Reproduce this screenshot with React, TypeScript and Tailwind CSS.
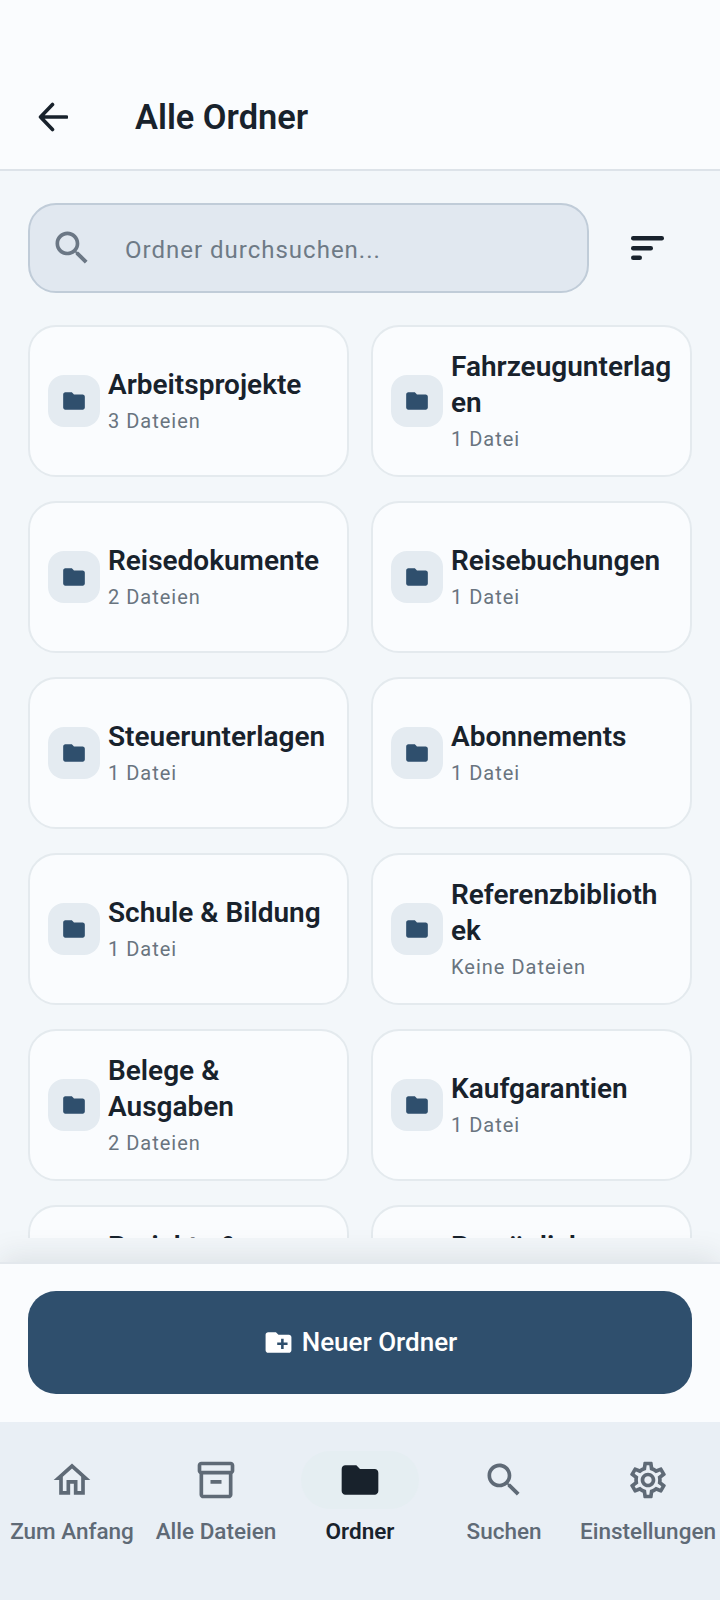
import React from "react";

const FONT = "font-['Roboto',sans-serif]";

const folderPath =
  "M10 4H4c-1.1 0-1.99.9-1.99 2L2 18c0 1.1.9 2 2 2h16c1.1 0 2-.9 2-2V8c0-1.1-.9-2-2-2h-8l-2-2z";
const searchPath =
  "M15.5 14h-.79l-.28-.27C15.41 12.59 16 11.11 16 9.5 16 5.91 13.09 3 9.5 3S3 5.91 3 9.5 5.91 16 9.5 16c1.61 0 3.09-.59 4.23-1.57l.27.28v.79l5 4.99L20.49 19l-4.99-5zm-6 0C7.01 14 5 11.99 5 9.5S7.01 5 9.5 5 14 7.01 14 9.5 11.99 14 9.5 14z";
const homePath =
  "M12 5.69l5 4.5V18h-2v-6H9v6H7v-7.81l5-4.5M12 3L2 12h3v8h6v-6h2v6h6v-8h3L12 3z";
const archivePath =
  "M20 2H4c-1 0-2 .9-2 2v3.01c0 .72.43 1.34 1 1.69V20c0 1.1 1.1 2 2 2h14c.9 0 2-.9 2-2V8.7c.57-.35 1-.97 1-1.69V4c0-1.1-1-2-2-2zm-1 18H5V9h14v11zm1-13H4V4h16v3zM9 12h6v2H9z";
const gearPath =
  "M19.43 12.98c.04-.32.07-.64.07-.98 0-.34-.03-.66-.07-.98l2.11-1.65c.19-.15.24-.42.12-.64l-2-3.46c-.09-.16-.26-.25-.44-.25-.06 0-.12.01-.17.03l-2.49 1c-.52-.4-1.08-.73-1.69-.98l-.38-2.65C14.46 2.18 14.25 2 14 2h-4c-.25 0-.46.18-.49.42l-.38 2.65c-.61.25-1.17.59-1.69.98l-2.49-1c-.06-.02-.12-.03-.18-.03-.17 0-.34.09-.43.25l-2 3.46c-.13.22-.07.49.12.64l2.11 1.65c-.04.32-.07.65-.07.98 0 .33.03.66.07.98l-2.11 1.65c-.19.15-.24.42-.12.64l2 3.46c.09.16.26.25.44.25.06 0 .12-.01.17-.03l2.49-1c.52.4 1.08.73 1.69.98l.38 2.65c.03.24.24.42.49.42h4c.25 0 .46-.18.49-.42l.38-2.65c.61-.25 1.17-.59 1.69-.98l2.49 1c.06.02.12.03.18.03.17 0 .34-.09.43-.25l2-3.46c.12-.22.07-.49-.12-.64l-2.11-1.65zm-1.98-1.71c.04.31.05.52.05.73 0 .21-.02.43-.05.73l-.14 1.13.89.7 1.08.84-.7 1.21-1.27-.51-1.04-.42-.9.68c-.43.32-.84.56-1.25.73l-1.06.43-.16 1.13-.2 1.35h-1.4l-.19-1.35-.16-1.13-1.06-.43c-.43-.18-.83-.41-1.23-.71l-.91-.7-1.06.43-1.27.51-.7-1.21 1.08-.84.89-.7-.14-1.13c-.03-.31-.05-.54-.05-.74s.02-.43.05-.73l.14-1.13-.89-.7-1.08-.84.7-1.21 1.27.51 1.04.42.9-.68c.43-.32.84-.56 1.25-.73l1.06-.43.16-1.13.2-1.35h1.39l.19 1.35.16 1.13 1.06.43c.43.18.83.41 1.23.71l.91.7 1.06-.43 1.27-.51.7 1.21-1.07.85-.89.7.14 1.13zM12 8c-2.21 0-4 1.79-4 4s1.79 4 4 4 4-1.79 4-4-1.79-4-4-4zm0 6c-1.1 0-2-.9-2-2s.9-2 2-2 2 .9 2 2-.9 2-2 2z";

function Icon({ d, className }: { d: string; className: string }) {
  return (
    <svg viewBox="0 0 24 24" fill="currentColor" className={className}>
      <path d={d} />
    </svg>
  );
}

const folders: { name: string; count: string }[] = [
  { name: "Arbeitsprojekte", count: "3 Dateien" },
  { name: "Fahrzeugunterlagen", count: "1 Datei" },
  { name: "Reisedokumente", count: "2 Dateien" },
  { name: "Reisebuchungen", count: "1 Datei" },
  { name: "Steuerunterlagen", count: "1 Datei" },
  { name: "Abonnements", count: "1 Datei" },
  { name: "Schule & Bildung", count: "1 Datei" },
  { name: "Referenzbibliothek", count: "Keine Dateien" },
  { name: "Belege & Ausgaben", count: "2 Dateien" },
  { name: "Kaufgarantien", count: "1 Datei" },
  { name: "Projekte & Planung", count: "1 Datei" },
  { name: "Persönliche Dokumente", count: "1 Datei" },
];

const navItems = [
  { label: "Zum Anfang", d: homePath },
  { label: "Alle Dateien", d: archivePath },
  { label: "Ordner", d: folderPath, active: true },
  { label: "Suchen", d: searchPath },
  { label: "Einstellungen", d: gearPath },
];

function FolderCard({ name, count }: { name: string; count: string }) {
  return (
    <div className="flex h-[152px] items-center gap-[8px] rounded-[28px] border-2 border-[#e4eaee] bg-[#fafcfe] pl-[18px] pr-[18px]">
      <div className="flex h-[52px] w-[52px] shrink-0 items-center justify-center rounded-[16px] bg-[#e4ebf1]">
        <Icon d={folderPath} className="h-[26px] w-[26px] text-[#2f4f6d]" />
      </div>
      <div className="min-w-0 flex-1 pt-[3px]">
        <div className="break-words text-[28px] font-semibold leading-[36px] text-[#18222c]">{name}</div>
        <div className="text-[20px] leading-[36px] tracking-[1px] text-[#69747f]">{count}</div>
      </div>
    </div>
  );
}

export default function App() {
  return (
    <div className={`${FONT} flex h-[1600px] w-[720px] flex-col overflow-hidden bg-[#f3f7fa]`}>
      <header className="flex h-[171px] shrink-0 items-end border-b-2 border-[#dde3e9] bg-[#fafcfe] pb-[30px] pl-[38px]">
        <svg viewBox="0 0 30 30" fill="none" stroke="#18222c" strokeWidth="3.6" strokeLinecap="round" strokeLinejoin="round" className="mb-[7px] h-[30px] w-[30px] shrink-0">
          <path d="M2.5 15H28.5M14.5 2.5 2.5 15 14.5 27.5" />
        </svg>
        <h1 className="ml-[67px] text-[34.4px] font-semibold leading-[44px] text-[#18222c]">Alle Ordner</h1>
      </header>

      <div className="flex h-[1067px] shrink-0 flex-col overflow-hidden px-[28px] pt-[32px]">
        <div className="flex shrink-0 items-center">
          <div className="flex h-[90px] w-[561px] items-center rounded-[28px] border-2 border-[#c0ccd8] bg-[#e1e8f0] pl-[20px]">
            <Icon d={searchPath} className="h-[44px] w-[44px] shrink-0 text-[#6b7785]" />
            <span className="ml-[31px] pt-[3px] text-[24px] tracking-[1px] text-[#6e7a86]">Ordner durchsuchen...</span>
          </div>
          <svg viewBox="0 0 33 24" fill="#18222c" className="ml-[42px] h-[24px] w-[33px] shrink-0">
            <rect x="0" y="0" width="33" height="4.5" rx="2.2" />
            <rect x="0" y="10" width="22" height="4.5" rx="2.2" />
            <rect x="0" y="19.5" width="11" height="4.5" rx="2.2" />
          </svg>
        </div>
        <div className="mt-[32px] grid grid-cols-2 gap-x-[22px] gap-y-[24px]">
          {folders.map((f) => (
            <FolderCard key={f.name} name={f.name} count={f.count} />
          ))}
        </div>
      </div>

      <div className="h-[24px] shrink-0" />

      <div className="flex h-[160px] shrink-0 items-start border-t-2 border-[#e3e8ed] bg-[#fafcfe] px-[28px] pt-[27px] shadow-[0_-6px_28px_rgba(30,40,50,0.1)]">
        <button className="flex h-[103px] w-full items-center justify-center gap-[8px] rounded-[28px] bg-[#2f4f6d] text-[26px] font-medium text-white">
          <svg viewBox="0 0 24 24" fill="currentColor" className="h-[31px] w-[31px]">
            <path d="M20 6h-8l-2-2H4c-1.11 0-2 .89-2 2v12c0 1.1.89 2 2 2h16c1.1 0 2-.9 2-2V8c0-1.1-.9-2-2-2zm-1 8h-3v3h-2v-3h-3v-2h3V9h2v3h3v2z" />
          </svg>
          Neuer Ordner
        </button>
      </div>

      <nav className="flex flex-1 bg-[#e9eff5]">
        {navItems.map((item) => (
          <div key={item.label} className="flex w-[144px] flex-col items-center pt-[29px]">
            <div className={`flex h-[58px] w-[118px] items-center justify-center rounded-[29px] ${item.active ? "bg-[#e5eef2]" : ""}`}>
              <Icon d={item.d} className={`h-[44px] w-[44px] ${item.active ? "text-[#18222c]" : "text-[#5f6a76]"}`} />
            </div>
            <span className={`mt-[6px] whitespace-nowrap text-[22.5px] leading-[32px] ${item.active ? "font-semibold text-[#18222c]" : "font-medium text-[#5f6a76]"}`}>
              {item.label}
            </span>
          </div>
        ))}
      </nav>
    </div>
  );
}
